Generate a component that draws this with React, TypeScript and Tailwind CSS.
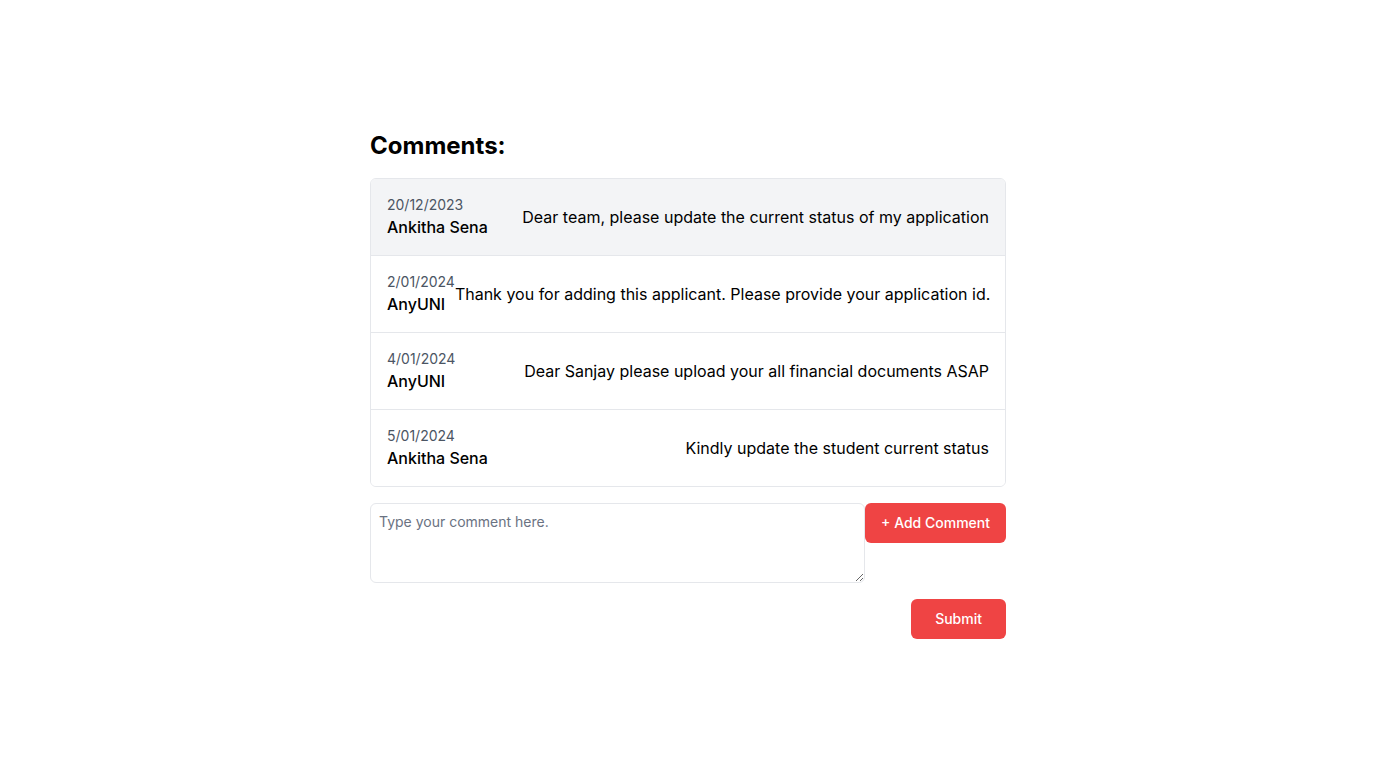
import React from 'react';

const comments = [
  { id: 1, date: '20/12/2023', author: 'Ankitha Sena', text: 'Dear team, please update the current status of my application' },
  { id: 2, date: '2/01/2024', author: 'AnyUNI', text: 'Thank you for adding this applicant. Please provide your application id.' },
  { id: 3, date: '4/01/2024', author: 'AnyUNI', text: 'Dear Sanjay please upload your all financial documents ASAP' },
  { id: 4, date: '5/01/2024', author: 'Ankitha Sena', text: 'Kindly update the student current status' },
];

const App = () => {
  return (
    <div className="min-h-screen flex items-center justify-center bg-white font-['Inter',sans-serif] text-gray-900">
      <div className="w-[636px]">
        <h2 className="text-2xl font-bold mb-4 text-black">Comments:</h2>
        <div className="border border-gray-200 rounded-md divide-y divide-gray-200 overflow-hidden">
          {comments.map((c, i) => (
            <div key={c.id} className={`flex items-center justify-between px-4 py-4 ${i === 0 ? 'bg-gray-100' : 'bg-white'}`}>
              <div className="shrink-0">
                <div className="text-sm text-[#4b5563]">{c.date}</div>
                <div className="text-base font-medium text-black">{c.author}</div>
              </div>
              <p className="text-base text-right text-black whitespace-nowrap">{c.text}</p>
            </div>
          ))}
        </div>

        <div className="flex items-start mt-4">
          <textarea
            placeholder="Type your comment here."
            className="flex-1 h-20 border border-gray-200 rounded-md p-2 text-sm placeholder:text-gray-500 outline-none"
          />
          <button className="bg-[#ef4444] text-white text-sm font-medium px-4 py-2.5 rounded-md">
            + Add Comment
          </button>
        </div>

        <div className="flex justify-end mt-4">
          <button className="bg-[#ef4444] text-white text-sm font-medium px-6 py-2.5 rounded-md">
            Submit
          </button>
        </div>
      </div>
    </div>
  );
};

export default App;
